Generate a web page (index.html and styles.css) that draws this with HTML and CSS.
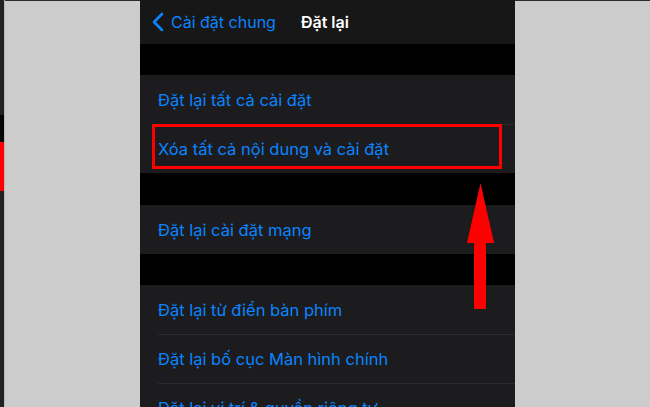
FILE: index.html
```html
<!DOCTYPE html>
<html lang="vi">
<head>
<meta charset="utf-8">
<title>Đặt lại</title>
<link rel="stylesheet" href="styles.css">
</head>
<body>
<div class="stage">
  <div class="edge">
    <div class="edge-a"></div>
    <div class="edge-b"></div>
    <div class="edge-red"></div>
    <div class="edge-c"></div>
  </div>
  <div class="side"></div>
  <div class="phone">
    <div class="nav">
      <div class="back">
        <svg class="chev" width="12" height="20" viewBox="0 0 12 20"><path d="M10 2 L2 10 L10 18" fill="none" stroke="#0a84ff" stroke-width="2.6" stroke-linecap="round" stroke-linejoin="round"/></svg>
        <span>Cài đặt chung</span>
      </div>
      <div class="title">Đặt lại</div>
    </div>
    <div class="gap g1"></div>
    <div class="group">
      <div class="row"><span>Đặt lại tất cả cài đặt</span></div>
      <div class="row"><span>Xóa tất cả nội dung và cài đặt</span></div>
    </div>
    <div class="gap g2"></div>
    <div class="group">
      <div class="row"><span>Đặt lại cài đặt mạng</span></div>
    </div>
    <div class="gap g1"></div>
    <div class="group">
      <div class="row"><span>Đặt lại từ điển bàn phím</span></div>
      <div class="row"><span>Đặt lại bố cục Màn hình chính</span></div>
      <div class="row"><span>Đặt lại vị trí &amp; quyền riêng tư</span></div>
    </div>
    <div class="highlight"></div>
    <svg class="arrow" width="28" height="127" viewBox="0 0 28 127"><polygon points="13.5,0 27,60 19,60 19,126 7,126 7,60 0,60" fill="#ff0000"/></svg>
  </div>
  <div class="side"></div>
</div>
</body>
</html>
```
FILE: styles.css
```css
html, body {
  margin: 0;
  padding: 0;
  background: #cccccc;
}
.stage {
  display: flex;
  width: 650px;
  height: 407px;
  overflow: hidden;
  font-family: "Inter", "Noto Sans", sans-serif;
}
.edge {
  width: 4px;
  display: flex;
  flex-direction: column;
  border-right: 1px solid #b8b8b8;
}
.edge-a { height: 115px; background: #222224; }
.edge-b { height: 27px; background: #050505; }
.edge-red { height: 49px; background: #ff0000; }
.edge-c { flex: 1; background: #222224; }
.side {
  width: 135px;
  background: #cccccc;
  border-top: 1px solid #2a2a2a;
}
.phone {
  position: relative;
  width: 375px;
  background: #000;
}
.nav {
  height: 44px;
  background: #171717;
  display: flex;
  align-items: center;
  padding-left: 12px;
}
.back {
  display: flex;
  align-items: center;
  gap: 7px;
  color: #0a84ff;
  font-size: 16px;
}
.chev { display: block; }
.title {
  margin-left: 25px;
  color: #fff;
  font-size: 16px;
  font-weight: 600;
}
.gap { height: 31px; }
.gap.g2 { height: 32px; }
.group { background: #1c1c1e; }
.row {
  height: 49px;
  margin-left: 18px;
  display: flex;
  align-items: center;
  color: #0a84ff;
  font-size: 16.5px;
  border-top: 1px solid #2a2a2c;
  box-sizing: border-box;
}
.row:first-child { border-top: none; }
.highlight {
  position: absolute;
  left: 12px;
  top: 124px;
  width: 350px;
  height: 45px;
  border: 3px solid #ff0000;
  box-sizing: border-box;
}
.arrow {
  position: absolute;
  left: 327px;
  top: 183px;
}
```
